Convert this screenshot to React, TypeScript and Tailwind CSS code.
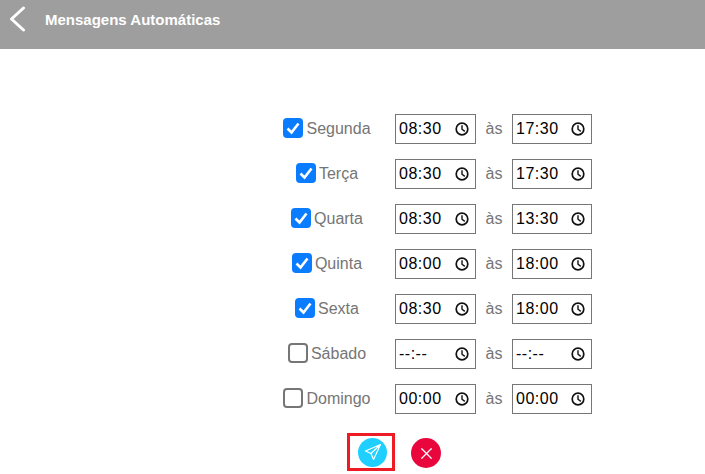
import { X } from "lucide-react"

interface DayRow {
  name: string
  checked: boolean
  start: string
  end: string
}

const days: DayRow[] = [
  { name: "Segunda", checked: true, start: "08:30", end: "17:30" },
  { name: "Terça", checked: true, start: "08:30", end: "17:30" },
  { name: "Quarta", checked: true, start: "08:30", end: "13:30" },
  { name: "Quinta", checked: true, start: "08:00", end: "18:00" },
  { name: "Sexta", checked: true, start: "08:30", end: "18:00" },
  { name: "Sábado", checked: false, start: "--:--", end: "--:--" },
  { name: "Domingo", checked: false, start: "00:00", end: "00:00" },
]

function Checkbox({ checked }: { checked: boolean }) {
  if (!checked) {
    return <span className="mb-[3px] h-5 w-5 shrink-0 rounded-[4px] border-2 border-[#767676] bg-white" />
  }
  return (
    <span className="mb-[3px] flex h-5 w-5 shrink-0 items-center justify-center rounded-[4px] bg-[#0a7cff]">
      <svg width="16" height="16" viewBox="0 0 16 16" fill="none">
        <path d="M2.5 8.5 L6.5 12.5 L13.5 3.5" stroke="white" strokeWidth="2.6" />
      </svg>
    </span>
  )
}

function TimeField({ value, width }: { value: string; width: string }) {
  return (
    <div className={`flex h-[30px] ${width} items-center justify-between border border-[#767676] pl-[3px] pr-[6px] text-[16px] tracking-[0.5px] text-black`}>
      <span>{value}</span>
      <svg width="16" height="16" viewBox="0 0 16 16" fill="none" stroke="#111" strokeWidth="1.7" className="translate-x-[1px]">
        <circle cx="8" cy="8" r="5.8" />
        <path d="M8 4.2 V8.2 L10.8 10.4" strokeWidth="1.4" />
      </svg>
    </div>
  )
}

export default function App() {
  return (
    <div className="h-[474px] w-[705px] overflow-hidden bg-white font-['Liberation_Sans',Arial,sans-serif]">
      <header className="flex h-[49px] items-start bg-[#9e9e9e] text-white">
        <svg width="18" height="26" viewBox="0 0 18 26" className="ml-[8px] mt-[6px]" fill="none">
          <path d="M15.5 2 L3.5 13 L15.5 24" stroke="white" strokeWidth="3" strokeLinecap="round" strokeLinejoin="round" />
        </svg>
        <h1 className="ml-[19px] mt-[12px] text-[15px] font-bold leading-4">Mensagens Automáticas</h1>
      </header>

      <div className="flex flex-col gap-[15px] pl-[280px] pt-[65px]">
        {days.map((day) => (
          <div key={day.name} className="flex h-[30px] items-center">
            <label className="flex w-[94px] items-center justify-center gap-[3px] text-[16px] text-[#757575]">
              <Checkbox checked={day.checked} />
              {day.name}
            </label>
            <div className="ml-[21px]">
              <TimeField value={day.start} width="w-[81px]" />
            </div>
            <span className="w-[36px] text-center text-[16px] text-[#757575]">às</span>
            <TimeField value={day.end} width="w-[80px]" />
          </div>
        ))}
      </div>

      <div className="mt-[19px] flex items-center pl-[347px]">
        <div className="flex h-[38px] w-[48px] items-center border-[3px] border-[#ed1c24] pl-[8px]">
          <button className="flex h-[29px] w-[29px] items-center justify-center rounded-full bg-[#1fcfff]">
            <svg width="18" height="18" viewBox="0 0 18 18" fill="none">
              <path
                d="M16.5 1.5 L1.5 8 L7 10.5 L9.5 16.5 Z M16.5 1.5 L7 10.5"
                stroke="white"
                strokeWidth="1.2"
                strokeLinejoin="round"
              />
            </svg>
          </button>
        </div>
        <button className="ml-[16px] mt-[2px] flex h-[30px] w-[30px] items-center justify-center rounded-full bg-[#e8063c] text-white">
          <X size={19} strokeWidth={1.5} />
        </button>
      </div>
    </div>
  )
}
